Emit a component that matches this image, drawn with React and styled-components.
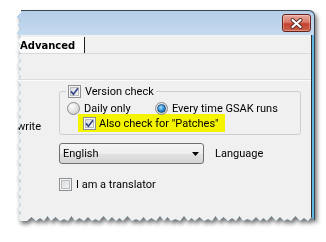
import { styled, createGlobalStyle } from "styled-components";

const W = 298;
const H = 213;

// torn paper edge along the left and bottom of the clipped screenshot
const spikes = [4, 3, 5, 2, 4, 5, 3, 4, 2, 5, 3, 4, 5, 2];
const tornEdge = (() => {
  const base = H - 2;
  const pts = [[4, 0], [W, 0], [W, base]];
  let x = W;
  let i = 0;
  while (x > 12) {
    const w = 7 + (i % 3);
    pts.push([x - w / 2, base - spikes[i % spikes.length]], [x - w, base]);
    x -= w;
    i++;
  }
  pts.push([3, base]);
  for (let y = base - 4, j = 0; y > 4; y -= 8, j++) {
    pts.push([j % 2 ? 0 : 1, y], [4, y - 4]);
  }
  return `polygon(${pts.map(([a, b]) => `${a}px ${b}px`).join(", ")})`;
})();

const GlobalStyle = createGlobalStyle`
  * { box-sizing: border-box; }
  body {
    margin: 0;
    background: #fff;
  }
`;

const Stage = styled.div`
  width: 326px;
  height: 242px;
  padding: 10px 0 0 17px;
  overflow: hidden;
  font-family: Roboto, "Liberation Sans", sans-serif;
  font-size: 11px;
  color: #000;
`;

const Shadow = styled.div`
  width: ${W}px;
  filter: drop-shadow(2px 3px 2px rgba(0, 0, 0, 0.55));
`;

const Window = styled.div`
  width: ${W}px;
  height: ${H}px;
  display: flex;
  flex-direction: column;
  background: #5db6e4;
  border-right: 1px solid #3d4650;
  border-top-right-radius: 6px;
  clip-path: ${tornEdge};
`;

const TitleBar = styled.div`
  height: 25px;
  flex: none;
  display: flex;
  justify-content: flex-end;
  align-items: flex-start;
  padding: 3px 3px 0 0;
  border-top: 1px solid #3f4852;
  border-top-right-radius: 6px;
  background: linear-gradient(#b5cde8, #c5daef);
`;

const CloseButton = styled.div`
  width: 29px;
  height: 18px;
  display: grid;
  place-items: center;
  border: 1px solid #6b2116;
  border-radius: 3px;
  background: linear-gradient(#e9aca2 0%, #d9786a 45%, #c4432f 55%, #cc5f4b 100%);
  box-shadow: inset 0 0 0 1px rgba(255, 255, 255, 0.3);
`;

const Client = styled.div`
  flex: 1;
  margin-right: 2px;
  display: flex;
  flex-direction: column;
  background: #f0f0f0;
  border-right: 1px solid #2e2e2e;
`;

const TabStrip = styled.div`
  height: 19px;
  flex: none;
  display: flex;
  align-items: stretch;
  border-bottom: 1px solid #d9d9d9;
`;

const ActiveTab = styled.div`
  width: 68px;
  margin-top: 2px;
  padding: 0 0 0 3px;
  display: flex;
  align-items: center;
  background: #fbfbfb;
  border-right: 1px solid #1e1e1e;
  font-family: "DejaVu Sans", Verdana, sans-serif;
  font-weight: bold;
  font-size: 10px;
`;

const PanelHead = styled.div`
  height: 26px;
  flex: none;
  border-bottom: 1px solid #dcdcdc;
  box-shadow: 0 1px 0 #fbfbfb;
`;

const Content = styled.div`
  display: grid;
  grid-template-columns: 24px 242px;
  column-gap: 18px;
  align-items: start;
  padding-top: 5px;
`;

const SideLabel = styled.div`
  grid-row: 1;
  align-self: end;
  margin-bottom: 2px;
  display: flex;
  justify-content: flex-end;
  white-space: nowrap;
  line-height: 13px;
`;

const GroupBox = styled.fieldset`
  grid-column: 2;
  grid-row: 1;
  margin: 0;
  padding: 4px 6px 2px 6px;
  border: 1px solid #c8cfd4;
  border-radius: 3px;
  min-width: 0;
`;

const Legend = styled.legend`
  padding: 0 2px;
  display: flex;
  align-items: center;
  gap: 4px;
  line-height: 13px;
`;

const RadioRow = styled.div`
  height: 12px;
  margin-left: 1px;
  display: grid;
  grid-template-columns: 88px auto;
  align-items: center;
`;

const Option = styled.label`
  display: flex;
  align-items: center;
  gap: 4px;
  line-height: 13px;
  white-space: nowrap;
`;

const Highlight = styled.div`
  width: fit-content;
  height: 18px;
  margin-left: 12px;
  padding: 0 6px 0 5px;
  display: flex;
  align-items: center;
  gap: 3px;
  background: #f4f400;
  white-space: nowrap;
`;

const Box = styled.span`
  width: 13px;
  height: 13px;
  flex: none;
  display: grid;
  place-items: center;
  border: 1px solid #8e8f8f;
  background: linear-gradient(135deg, #d3d6da, #fbfbfb);
  box-shadow: inset 0 0 0 1px #f6f6f6, inset 0 0 0 2px #b8bcc1;
`;

const Radio = styled.span`
  width: 13px;
  height: 13px;
  flex: none;
  display: grid;
  place-items: center;
  border: 1px solid #8b8b8b;
  border-radius: 50%;
  background: radial-gradient(circle at 35% 30%, #fdfdfd, #d4d4d4 75%);

  &::after {
    content: "";
    display: ${({ $on }) => ($on ? "block" : "none")};
    width: 7px;
    height: 7px;
    border-radius: 50%;
    border: 1px solid #1b4f7e;
    background: radial-gradient(circle at 40% 35%, #a9e0fb, #2b8ad0 55%, #11528f);
  }
`;

const ComboRow = styled.div`
  grid-column: 2;
  margin-top: 8px;
  display: flex;
  align-items: center;
  gap: 11px;
`;

const Combo = styled.div`
  width: 145px;
  height: 21px;
  padding: 0 4px 0 3px;
  display: flex;
  align-items: center;
  justify-content: space-between;
  border: 1px solid #707070;
  border-radius: 3px;
  background: linear-gradient(#f5f5f5 0%, #eeeeee 50%, #e2e2e2 50%, #d6d6d6 100%);
`;

const TranslatorRow = styled.div`
  grid-column: 2;
  margin-top: 14px;
`;

const Check = ({ on }) => (
  <Box>
    {on && (
      <svg width="9" height="9" viewBox="0 0 9 9">
        <path d="M1 4.4 L3.4 7.2 L8 1.2" fill="none" stroke="#36468a" strokeWidth="1.7" />
      </svg>
    )}
  </Box>
);

const App = () => (
  <Stage>
    <GlobalStyle />
    <Shadow>
      <Window>
        <TitleBar>
          <CloseButton>
            <svg width="13" height="11" viewBox="0 0 13 11">
              <path d="M2.5 2 L10.5 9 M10.5 2 L2.5 9" stroke="#5b2a24" strokeWidth="4" strokeLinecap="round" />
              <path d="M2.5 2 L10.5 9 M10.5 2 L2.5 9" stroke="#fff" strokeWidth="2.2" strokeLinecap="round" />
            </svg>
          </CloseButton>
        </TitleBar>
        <Client>
          <TabStrip>
            <ActiveTab>Advanced</ActiveTab>
          </TabStrip>
          <PanelHead />
          <Content>
            <SideLabel>write</SideLabel>
            <GroupBox>
              <Legend>
                <Check on />
                Version check
              </Legend>
              <RadioRow>
                <Option>
                  <Radio />
                  Daily only
                </Option>
                <Option>
                  <Radio $on />
                  Every time GSAK runs
                </Option>
              </RadioRow>
              <Highlight>
                <Check on />
                Also check for "Patches"
              </Highlight>
            </GroupBox>
            <ComboRow>
              <Combo>
                English
                <svg width="7" height="4" viewBox="0 0 7 4">
                  <path d="M0 0 H7 L3.5 4 Z" fill="#000" />
                </svg>
              </Combo>
              Language
            </ComboRow>
            <TranslatorRow>
              <Option>
                <Check />
                I am a translator
              </Option>
            </TranslatorRow>
          </Content>
        </Client>
      </Window>
    </Shadow>
  </Stage>
);

export default App;
